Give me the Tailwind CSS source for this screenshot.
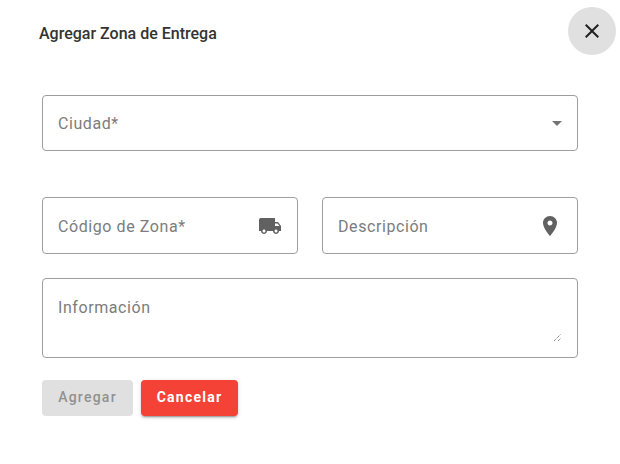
<!DOCTYPE html>
<html lang="es">
  <head>
    <meta charset="UTF-8" />
    <meta name="viewport" content="width=device-width, initial-scale=1.0" />
    <title>Agregar Zona de Entrega</title>
    <script src="https://cdn.jsdelivr.net/npm/@tailwindcss/browser@4"></script>
  </head>

  <body class="bg-white font-['Roboto',sans-serif] w-[620px] h-[464px] overflow-hidden">
    <div class="flex items-start justify-between pt-[7px] pl-[39px] pr-1 h-[95px]">
      <h2 class="mt-[17px] text-[16px] leading-[20px] font-medium text-[#333333]">Agregar Zona de Entrega</h2>
      <button class="w-12 h-12 rounded-full bg-[#e0e0e0] flex items-center justify-center">
        <svg class="w-6 h-6 fill-[#212121]" viewBox="0 0 24 24"><path d="M19 6.41 17.59 5 12 10.59 6.41 5 5 6.41 10.59 12 5 17.59 6.41 19 12 13.41 17.59 19 19 17.59 13.41 12z" /></svg>
      </button>
    </div>

    <form class="mx-[42px] w-[536px]">
      <!-- ciudad -->
      <div class="h-14 border border-[#9e9e9e] rounded flex items-center justify-between pl-[15px] pr-2">
        <span class="pt-[2px] text-[16px] tracking-[0.58px] text-[#7c7c7c]">Ciudad*</span>
        <svg class="w-6 h-6 fill-[#757575]" viewBox="0 0 24 24"><path d="M7 10l5 5 5-5z" /></svg>
      </div>

      <div class="flex gap-6 mt-[46px]">
        <div class="w-[256px] h-[57px] border border-[#9e9e9e] rounded flex items-center justify-between pl-[15px] pr-[15px]">
          <span class="pt-[2px] text-[16px] tracking-[0.58px] text-[#7c7c7c]">Código de Zona*</span>
          <svg class="w-6 h-6 fill-[#616161]" viewBox="0 0 24 24"><path d="M20 8h-3V4H3c-1.1 0-2 .9-2 2v11h2c0 1.66 1.34 3 3 3s3-1.34 3-3h6c0 1.66 1.34 3 3 3s3-1.34 3-3h2v-5l-3-4zM6 18.5c-.83 0-1.5-.67-1.5-1.5s.67-1.5 1.5-1.5 1.5.67 1.5 1.5-.67 1.5-1.5 1.5zm13.5-9 1.96 2.5H17V9.5h2.5zm-1.5 9c-.83 0-1.5-.67-1.5-1.5s.67-1.5 1.5-1.5 1.5.67 1.5 1.5-.67 1.5-1.5 1.5z" /></svg>
        </div>
        <div class="w-[256px] h-[57px] border border-[#9e9e9e] rounded flex items-center justify-between pl-[15px] pr-[15px]">
          <span class="pt-[2px] text-[16px] tracking-[0.58px] text-[#7c7c7c]">Descripción</span>
          <svg class="w-6 h-6 fill-[#616161]" viewBox="0 0 24 24"><path d="M12 2C8.13 2 5 5.13 5 9c0 5.25 7 13 7 13s7-7.75 7-13c0-3.87-3.13-7-7-7zm0 9.5c-1.38 0-2.5-1.12-2.5-2.5s1.12-2.5 2.5-2.5 2.5 1.12 2.5 2.5-1.12 2.5-2.5 2.5z" /></svg>
        </div>
      </div>

      <div class="relative mt-6 h-20 border border-[#9e9e9e] rounded pl-[15px] pt-[19px]">
        <span class="block text-[16px] leading-[20px] tracking-[0.58px] text-[#7c7c7c]">Información</span>
        <svg class="absolute right-[15px] bottom-[15px] w-[9px] h-[9px] stroke-[#616161]" viewBox="0 0 9 9" fill="none"><path d="M1 8 8 1M5 8 8 5" stroke-width="1" stroke-dasharray="1 1" /></svg>
      </div>

      <div class="flex gap-2 mt-[22px]">
        <button type="button" class="w-[91px] h-9 pb-[2px] rounded bg-[#e0e0e0] text-[#919191] text-[14px] font-medium tracking-[1.25px]">Agregar</button>
        <button type="button" class="w-[97px] h-9 pb-[2px] rounded bg-[#f44336] text-white text-[14px] font-bold tracking-[1.25px] shadow-[0_3px_1px_-2px_rgba(0,0,0,0.2),0_2px_2px_0_rgba(0,0,0,0.14),0_1px_5px_0_rgba(0,0,0,0.12)]">Cancelar</button>
      </div>
    </form>
  </body>
</html>
